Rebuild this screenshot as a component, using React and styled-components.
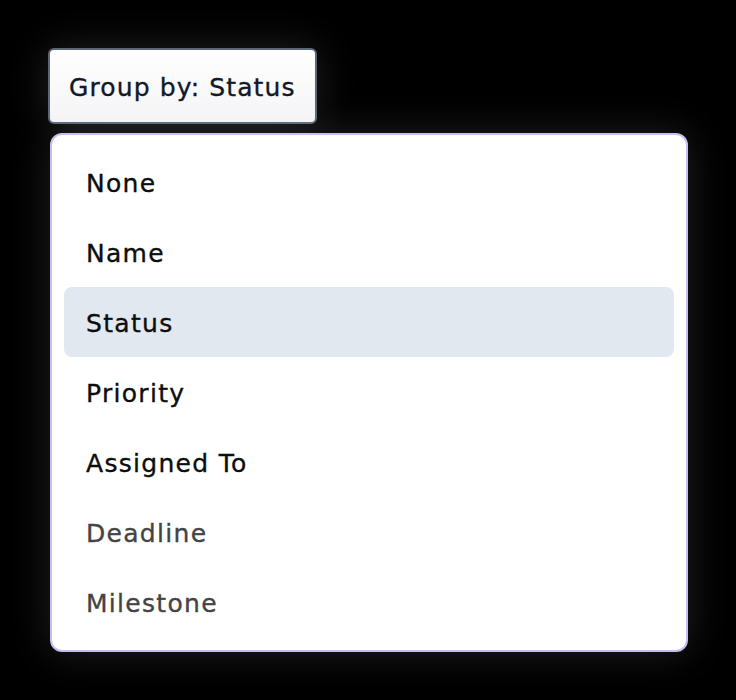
import React, { useState } from "react";
import styled, { createGlobalStyle } from "styled-components";

const Global = createGlobalStyle`
  html, body {
    margin: 0;
    background: #000;
  }
  body {
    font-family: "DejaVu Sans", "Noto Sans", sans-serif;
  }
`;

const Page = styled.div`
  min-height: 700px;
  padding: 48px 0 0 48px;
  box-sizing: border-box;
  display: flex;
  flex-direction: column;
  align-items: flex-start;
`;

const Trigger = styled.button`
  height: 76px;
  padding: 2px 19px 0;
  border: 2px solid #5b6678;
  border-radius: 6px;
  background: linear-gradient(#ffffff, #f4f4f6);
  color: #111827;
  font-family: inherit;
  font-size: 25px;
  letter-spacing: 1.1px;
  -webkit-text-stroke: 0.35px currentColor;
  box-shadow: 0 0 40px rgba(255, 255, 255, 0.13);
  cursor: pointer;
`;

const Menu = styled.ul`
  list-style: none;
  margin: 9px 0 0 2px;
  padding: 12px 12px 13px;
  width: 638px;
  box-sizing: border-box;
  background: #fff;
  border: 2px solid #c6bdf2;
  border-radius: 12px;
  box-shadow: 0 0 40px rgba(255, 255, 255, 0.13);
`;

const Item = styled.li`
  height: 70px;
  display: flex;
  align-items: center;
  padding: 2px 22px 0;
  box-sizing: border-box;
  border-radius: 8px;
  font-size: 25px;
  letter-spacing: 1.3px;
  -webkit-text-stroke: 0.35px currentColor;
  color: ${({ muted }) => (muted ? "#444444" : "#0d0d0d")};
  background: ${({ active }) => (active ? "#e2e8f0" : "transparent")};
  cursor: pointer;
`;

const options = [
  { label: "None" },
  { label: "Name" },
  { label: "Status" },
  { label: "Priority" },
  { label: "Assigned To" },
  { label: "Deadline", muted: true },
  { label: "Milestone", muted: true },
];

export default function App() {
  const [group, setGroup] = useState("Status");
  return (
    <>
      <Global />
      <Page>
        <Trigger>Group by: {group}</Trigger>
        <Menu>
          {options.map((o) => (
            <Item
              key={o.label}
              muted={o.muted}
              active={o.label === group}
              onClick={() => setGroup(o.label)}
            >
              {o.label}
            </Item>
          ))}
        </Menu>
      </Page>
    </>
  );
}
